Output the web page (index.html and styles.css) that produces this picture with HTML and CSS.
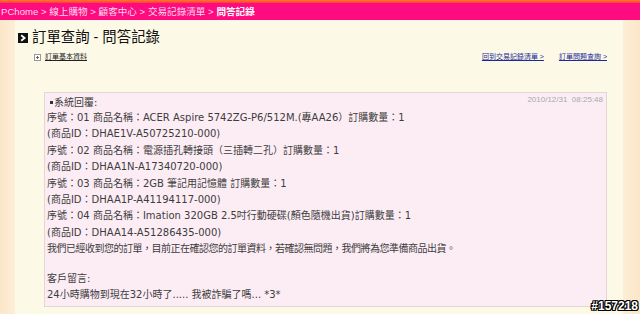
FILE: index.html
```html
<!DOCTYPE html>
<html lang="zh-Hant">
<head>
<meta charset="utf-8">
<title>訂單查詢 - 問答記錄</title>
<link rel="stylesheet" href="styles.css">
</head>
<body>
<div class="page">
  <header class="topbar">
    <div class="topline"></div>
    <nav class="crumbs">PChome &gt; 線上購物 &gt; 顧客中心 &gt; 交易記錄清單 &gt; <b>問答記錄</b></nav>
  </header>
  <div class="frame">
    <div class="side side-left"></div>
    <main class="main">
      <h1 class="title"><span class="title-icon"><svg viewBox="0 0 10 10" width="10" height="10"><rect width="10" height="10" fill="#111"/><path d="M3.2 2.2 L6.6 5 L3.2 7.8" fill="none" stroke="#fff" stroke-width="1.8"/></svg></span>訂單查詢 - 問答記錄</h1>
      <div class="subrow">
        <a class="basic" href="#"><span class="plus"></span><span class="basic-text">訂單基本資料</span></a>
        <div class="links">
          <a href="#">回到交易記錄清單 &gt;</a>
          <a href="#">訂單問題查詢 &gt;</a>
        </div>
      </div>
      <section class="box">
        <div class="box-head">
          <span class="sys"><span class="sq"></span>系統回覆:</span>
          <span class="time">2010/12/31&nbsp;&nbsp;08:25:48</span>
        </div>
        <p class="line">序號：01 商品名稱：ACER Aspire 5742ZG-P6/512M.(專AA26）訂購數量：1</p>
        <p class="line">(商品ID：DHAE1V-A50725210-000)</p>
        <p class="line">序號：02 商品名稱：電源插孔轉接頭（三插轉二孔）訂購數量：1</p>
        <p class="line">(商品ID：DHAA1N-A17340720-000)</p>
        <p class="line">序號：03 商品名稱：2GB 筆記用記憶體 訂購數量：1</p>
        <p class="line">(商品ID：DHAA1P-A41194117-000)</p>
        <p class="line">序號：04 商品名稱：Imation 320GB 2.5吋行動硬碟(顏色隨機出貨)訂購數量：1</p>
        <p class="line">(商品ID：DHAA14-A51286435-000)</p>
        <p class="line narrow">我們已經收到您的訂單，目前正在確認您的訂單資料，若確認無問題，我們將為您準備商品出貨。</p>
        <p class="line gap">客戶留言:</p>
        <p class="line">24小時購物到現在32小時了..... 我被詐騙了嗎... *3*</p>
      </section>
    </main>
    <div class="side side-right"></div>
  </div>
  <div class="stamp">#157218</div>
</div>
</body>
</html>
```

FILE: styles.css
```css
html, body {
  margin: 0;
  padding: 0;
}
body {
  width: 640px;
  height: 314px;
  overflow: hidden;
  background: #fdf9e7;
  font-family: "Liberation Sans", "Noto Sans CJK TC", sans-serif;
  color: #333;
}
.page {
  position: relative;
  width: 640px;
  height: 314px;
  display: flex;
  flex-direction: column;
}
.topbar {
  display: flex;
  flex-direction: column;
}
.topline {
  height: 3px;
  background: linear-gradient(to bottom, #ff7a1a, #ff3a4a);
}
.crumbs {
  height: 17px;
  background: #fe0b7f;
  color: #ffd9ec;
  font-size: 9.6px;
  line-height: 17px;
  padding-left: 1px;
  white-space: nowrap;
}
.crumbs b {
  color: #fff;
  font-weight: bold;
}
.frame {
  flex: 1;
  display: flex;
}
.side-left {
  width: 15px;
  background: linear-gradient(to right, #fbe6c9, #fdeed6);
}
.side-right {
  width: 17px;
  background: linear-gradient(to right, #fdeed6, #fce6c8);
}
.main {
  flex: 1;
  display: flex;
  flex-direction: column;
  padding: 0 16px 0 3px;
}
.title {
  margin: 9px 0 0 0;
  height: 17px;
  display: flex;
  align-items: center;
  font-size: 14.4px;
  font-weight: normal;
  color: #111;
  line-height: 17px;
  white-space: nowrap;
}
.title-icon {
  display: flex;
  width: 10px;
  height: 10px;
  margin-right: 4px;
}
.subrow {
  margin-top: 6px;
  height: 10px;
  display: flex;
  align-items: center;
  justify-content: space-between;
  padding-left: 16px;
}
.basic {
  display: flex;
  align-items: center;
  color: #222;
  font-size: 7px;
  line-height: 10px;
}
.plus {
  position: relative;
  width: 5px;
  height: 5px;
  border: 1px solid #999;
  background: #fff;
  margin-right: 4px;
}
.plus::before, .plus::after {
  content: "";
  position: absolute;
  background: #666;
}
.plus::before {
  left: 1px; top: 2px; width: 3px; height: 1px;
}
.plus::after {
  left: 2px; top: 1px; width: 1px; height: 3px;
}
.basic-text {
  text-decoration: underline;
}
.links {
  display: flex;
  gap: 15px;
  font-size: 7px;
  line-height: 10px;
}
.links a {
  color: #1b2a9a;
  text-decoration: underline;
}
.box {
  margin: 30px 0 0 26px;
  height: 211px;
  border: 1px solid #e2d6d6;
  background: #fcedf5;
  padding: 2px 3px 0 2px;
  font-family: "DejaVu Sans", "Noto Sans CJK TC", sans-serif;
  font-size: 10px;
  color: #3c3c3c;
}
.box-head {
  display: flex;
  justify-content: space-between;
  align-items: flex-start;
  height: 15px;
}
.sys {
  display: flex;
  align-items: center;
  line-height: 15px;
  height: 15px;
  margin-left: 3px;
}
.sq {
  width: 3px;
  height: 3px;
  background: #333;
  margin-right: 1px;
}
.time {
  font-family: "Liberation Sans", sans-serif;
  font-size: 8px;
  line-height: 9px;
  color: #aaa;
}
.line {
  margin: 0;
  line-height: 16.4px;
  white-space: nowrap;
}
.line.narrow {
  letter-spacing: -0.5px;
}
.line.gap {
  margin-top: 13.4px;
}
.stamp {
  position: absolute;
  right: 2px;
  bottom: 1px;
  font-family: "Liberation Sans", sans-serif;
  font-weight: bold;
  font-size: 12px;
  color: #fff;
  text-shadow: -1px -1px 0 #000, 1px -1px 0 #000, -1px 1px 0 #000, 1px 1px 0 #000, 0 1px 0 #000, 0 -1px 0 #000, 1px 0 0 #000, -1px 0 0 #000;
}
```
